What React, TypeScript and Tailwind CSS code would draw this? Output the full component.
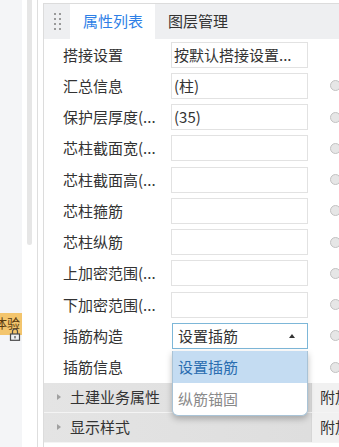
import React from 'react'

const font = { fontFamily: '"Noto Sans CJK SC", "Noto Sans", sans-serif' }

interface Row {
  label: string
  value?: string
  radio: boolean
}

const rows: Row[] = [
  { label: '搭接设置', value: '按默认搭接设置...', radio: false },
  { label: '汇总信息', value: '(柱)', radio: true },
  { label: '保护层厚度(...', value: '(35)', radio: true },
  { label: '芯柱截面宽(...', radio: true },
  { label: '芯柱截面高(...', radio: true },
  { label: '芯柱箍筋', radio: true },
  { label: '芯柱纵筋', radio: true },
  { label: '上加密范围(...', radio: true },
  { label: '下加密范围(...', radio: true },
]

function Radio() {
  return <div className="ml-[18px] h-[11px] w-[11px] shrink-0 rounded-full border border-[#c2c2c2] bg-[#e6e6e6]" />
}

function DragHandle() {
  return (
    <div className="grid grid-cols-2 gap-x-[3px] gap-y-[3px]">
      {Array.from({ length: 8 }).map((_, i) => (
        <div key={i} className="h-[2px] w-[2px] bg-[#9a9a9a]" />
      ))}
    </div>
  )
}

function SectionBar({ title }: { title: string }) {
  return (
    <div className="flex h-[30px] border-b border-[#f4f4f4]">
      <div className="flex flex-1 items-center bg-gradient-to-r from-[#e4e4e4] to-[#dedede] pl-[13px]">
        <div className="h-0 w-0 border-y-[3px] border-l-[4px] border-y-transparent border-l-[#a0a0a0]" />
        <span className="ml-[9px] whitespace-nowrap text-[15px] leading-[20px] text-[#333]">{title}</span>
      </div>
      <div className="flex w-[28px] items-center border-l border-[#d6d6d6] bg-[#f1f1f1] pl-[8px]">
        <span className="whitespace-nowrap text-[15px] leading-[20px] text-[#333]">附加</span>
      </div>
    </div>
  )
}

export default function App() {
  return (
    <div className="relative flex h-[447px] w-[339px] overflow-hidden bg-white" style={font}>
      {/* 左侧栏 */}
      <div className="flex w-[22px] shrink-0 flex-col bg-[#f4f5f7] pt-[313px]">
        <div className="relative h-[22px] overflow-hidden bg-[#f3c56d]">
          <span className="absolute left-[-6px] top-[1px] whitespace-nowrap text-[13px] leading-[18px] text-[#5a3a10]">体验</span>
        </div>
        <div className="relative z-10 -mt-[8px] ml-[9px] h-[14px] w-[12px]">
          <svg width="12" height="14" viewBox="0 0 12 14" className="block">
            <path d="M3.5 7V4.5a2.5 2.5 0 0 1 5 0V7" fill="none" stroke="#4a4a4a" strokeWidth="1.2" />
            <rect x="1.5" y="7" width="9" height="6.3" fill="#eef0f3" stroke="#4a4a4a" strokeWidth="1.2" />
            <rect x="5.4" y="9" width="1.2" height="2.4" fill="#4a4a4a" />
          </svg>
        </div>
      </div>
      <div className="w-[5px] shrink-0" />
      <div className="h-[245px] w-[5px] shrink-0 rounded-b bg-[#e6e6e6]" />
      <div className="w-[5px] shrink-0" />
      <div className="w-[1px] shrink-0 bg-[#dedede]" />
      <div className="w-[5px] shrink-0" />

      {/* 属性面板 */}
      <div className="mt-[3px] flex min-w-0 flex-1 flex-col border-l border-t border-[#dcdcdc]">
        <div className="flex h-[35px] shrink-0 bg-[#eeeff1]">
          <div className="flex w-[26px] items-center justify-center">
            <DragHandle />
          </div>
          <div className="flex w-[85px] items-center bg-white pl-[13px] text-[15px] text-[#2e7fe6]">属性列表</div>
          <div className="flex items-center whitespace-nowrap pl-[13px] text-[15px] text-[#333]">图层管理</div>
        </div>

        <div className="flex flex-col">
          {rows.map((r) => (
            <div key={r.label} className="flex h-[31.25px] items-center">
              <div className="w-[124px] shrink-0 whitespace-nowrap pl-[19px] text-[15px] leading-[20px] text-[#333]">{r.label}</div>
              <div className="w-[144px] shrink-0 pl-[3px] pr-[4px]">
                <div className="flex h-[26px] items-center whitespace-nowrap border border-[#e2e2e2] bg-white pl-[2px] text-[15px] leading-[20px] text-[#333]">
                  {r.value}
                </div>
              </div>
              {r.radio && <Radio />}
            </div>
          ))}

          {/* 插筋构造 下拉 */}
          <div className="flex h-[31.25px] items-center">
            <div className="w-[124px] shrink-0 whitespace-nowrap pl-[19px] text-[15px] leading-[20px] text-[#333]">插筋构造</div>
            <div className="relative w-[144px] shrink-0 pl-[4px] pr-[4px]">
              <div className="flex h-[26px] items-center justify-between border border-[#7db7d8] bg-white pl-[5px] pr-[12px] text-[15px] leading-[20px] text-[#333]">
                <span>设置插筋</span>
                <div className="h-0 w-0 border-x-[3px] border-b-[4px] border-x-transparent border-b-[#333]" />
              </div>
              <div className="absolute left-[4px] right-[4px] top-[28px] z-10 overflow-hidden rounded-b-[6px] border border-t-0 border-[#a9c3d6] bg-white shadow-[0_3px_6px_rgba(0,0,0,0.25)]">
                <div className="flex h-[32px] items-center bg-[#c4dcf2] pl-[5px] text-[15px] leading-[20px] text-[#2a6db0]">设置插筋</div>
                <div className="flex h-[32px] items-center pl-[5px] text-[15px] leading-[20px] text-[#8a8a8a]">纵筋锚固</div>
              </div>
            </div>
            <Radio />
          </div>

          <div className="flex h-[31.25px] items-center">
            <div className="w-[124px] shrink-0 whitespace-nowrap pl-[19px] text-[15px] leading-[20px] text-[#333]">插筋信息</div>
            <div className="w-[144px] shrink-0" />
            <Radio />
          </div>
        </div>

        <SectionBar title="土建业务属性" />
        <SectionBar title="显示样式" />
      </div>
    </div>
  )
}
